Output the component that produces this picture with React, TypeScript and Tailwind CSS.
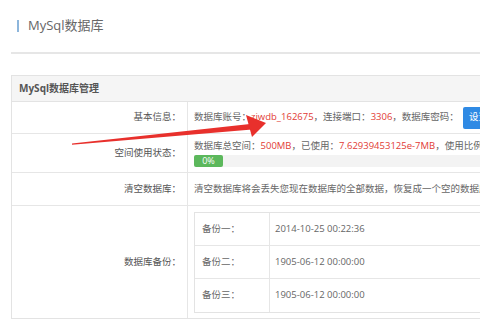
import React from "react";

const font = { fontFamily: '"Open Sans", "Noto Sans CJK SC", sans-serif' };

const backups = [
  { label: "备份一：", time: "2014-10-25 00:22:36" },
  { label: "备份二：", time: "1905-06-12 00:00:00" },
  { label: "备份三：", time: "1905-06-12 00:00:00" },
];

function Red({ children }: { children: React.ReactNode }) {
  return <span className="text-[#e23b35]">{children}</span>;
}

export default function App() {
  return (
    <div
      className="relative w-[480px] h-[320px] overflow-hidden bg-white text-[9.5px] text-[#666]"
      style={font}
    >
      {/* page title */}
      <div className="h-[52px] flex items-center pl-[17px]">
        <span className="w-[2px] h-[12px] bg-[#8db6dc]" />
        <span className="ml-[9px] text-[13px] text-[#666]">MySql数据库</span>
      </div>
      <div className="ml-[11px] h-[2px] bg-[#e6e6e6]" />

      {/* panel */}
      <div className="ml-[11px] mt-[21px] w-[540px] border border-[#e3e3e3]">
        <div className="h-[26px] flex items-center pl-[7px] bg-[#f5f5f5] border-b border-[#e3e3e3] font-bold text-[10px] text-[#555]">
          MySql数据库管理
        </div>

        <div className="flex h-[32px] border-b border-[#e6e6e6]">
          <div className="w-[176px] shrink-0 flex items-center justify-end pr-[6px] border-r border-[#e6e6e6] text-[#555]">
            基本信息：
          </div>
          <div className="flex items-center pl-[6px] whitespace-nowrap">
            数据库账号：<Red>zjwdb_162675</Red>，连接端口：<Red>3306</Red>，数据库密码：
            <span className="ml-[4px] h-[22px] px-[6px] flex items-center rounded-[2px] bg-[#2f8ae4] text-white">
              设置密码
            </span>
          </div>
        </div>

        <div className="flex h-[39px] border-b border-[#e6e6e6]">
          <div className="w-[176px] shrink-0 flex items-center justify-end pr-[6px] border-r border-[#e6e6e6] text-[#555]">
            空间使用状态：
          </div>
          <div className="flex-1 flex flex-col justify-center pl-[6px] whitespace-nowrap">
            <div className="leading-[14px]">
              数据库总空间：<Red>500MB</Red>，已使用：<Red>7.62939453125e-7MB</Red>，使用比例：<Red>0%</Red>
            </div>
            <div className="mt-[2px] h-[12px] bg-[#f3f3f3] rounded-[2px] flex">
              <div className="w-[29px] h-full bg-[#5cb85c] rounded-[2px] flex items-center justify-center text-white text-[9px]">
                0%
              </div>
            </div>
          </div>
        </div>

        <div className="flex h-[33px] border-b border-[#e6e6e6]">
          <div className="w-[176px] shrink-0 flex items-center justify-end pr-[6px] border-r border-[#e6e6e6] text-[#555]">
            清空数据库：
          </div>
          <div className="flex items-center pl-[6px] whitespace-nowrap">
            清空数据库将会丢失您现在数据库的全部数据，恢复成一个空的数据库。
          </div>
        </div>

        <div className="flex h-[112px]">
          <div className="w-[176px] shrink-0 flex items-center justify-end pr-[6px] border-r border-[#e6e6e6] text-[#555]">
            数据库备份：
          </div>
          <div className="flex-1 pl-[6px] pt-[6px]">
            <div className="border border-[#e3e3e3]">
              {backups.map((b, i) => (
                <div
                  key={i}
                  className={`flex h-[33px] ${i < 2 ? "border-b border-[#e6e6e6]" : ""}`}
                >
                  <div className="w-[75px] shrink-0 flex items-center pl-[7px] border-r border-[#e6e6e6]">
                    {b.label}
                  </div>
                  <div className="flex items-center pl-[5px]">{b.time}</div>
                </div>
              ))}
            </div>
          </div>
        </div>
      </div>

      {/* red annotation arrow */}
      <svg
        className="absolute left-0 top-0 pointer-events-none"
        width="480"
        height="320"
        viewBox="0 0 480 320"
      >
        <polygon points="72,143.5 250,124 252,129.5 72,144.8" fill="#e8302c" />
        <polygon points="246,115 266,123 252,137" fill="#e8302c" />
      </svg>
    </div>
  );
}
